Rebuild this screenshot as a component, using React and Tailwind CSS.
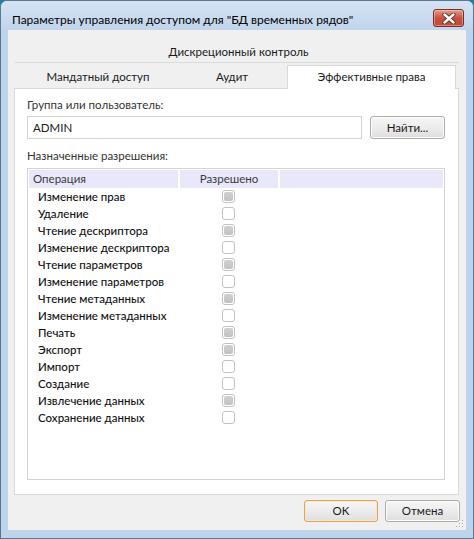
import React from "react";

const rows = [
  ["Изменение прав", true],
  ["Удаление", false],
  ["Чтение дескриптора", true],
  ["Изменение дескриптора", false],
  ["Чтение параметров", true],
  ["Изменение параметров", false],
  ["Чтение метаданных", true],
  ["Изменение метаданных", false],
  ["Печать", true],
  ["Экспорт", true],
  ["Импорт", false],
  ["Создание", false],
  ["Извлечение данных", true],
  ["Сохранение данных", false],
];

function Check({ on }) {
  return (
    <div className="w-[13px] h-[13px] rounded-[3px] border border-[#c2c2c2] bg-white flex items-center justify-center">
      {on && <div className="w-[9px] h-[9px] rounded-[2px] bg-gradient-to-b from-[#d0d0d0] to-[#c2c2c2]" />}
    </div>
  );
}

export default function App() {
  return (
    <div className="w-[474px] h-[539px] overflow-hidden bg-[#1d7f9e] text-[11.5px] leading-[16px] font-['Lato','Noto_Sans',sans-serif]">
      <div className="w-full h-full flex flex-col rounded-t-[7px] border border-[#5b7794] bg-[#bed4eb]">
        {/* title bar */}
        <div className="h-[29px] flex items-start justify-between pl-[11px] pr-[9px] bg-gradient-to-b from-[#d5e3f3] to-[#c1d5ec] rounded-t-[6px]">
          <div className="pt-[11px] text-[12px] text-[#000] whitespace-nowrap">
            Параметры управления доступом для "БД временных рядов"
          </div>
          <div className="mt-[8px] w-[31px] h-[18px] rounded-[3px] border border-[#7a2b27] bg-gradient-to-b from-[#e49a8c] via-[#c8503f] to-[#c24a36] flex items-center justify-center shadow-[inset_0_0_0_1px_rgba(255,255,255,0.35)]">
            <svg width="14" height="11" viewBox="0 0 14 11">
              <path d="M2.5 1.5 L11.5 9.5 M11.5 1.5 L2.5 9.5" stroke="#5a2a24" strokeWidth="4.2" strokeLinecap="round" />
              <path d="M2.5 1.5 L11.5 9.5 M11.5 1.5 L2.5 9.5" stroke="#ffffff" strokeWidth="2.4" strokeLinecap="round" />
            </svg>
          </div>
        </div>

        {/* client */}
        <div className="relative flex-1 mx-[7px] mb-[8px] bg-[#f0f0f0] flex flex-col pl-[6px] pr-[7px]">
          {/* tab row 1 */}
          <div className="mt-[11px] h-[22px] border-b border-[#dadada] flex items-center justify-center text-[#1a1a1a] ml-[1px] pl-[3px]">
            Дискреционный контроль
          </div>
          {/* tab row 2 */}
          <div className="h-[25px] flex items-end text-[#1a1a1a]">
            <div className="w-[168px] h-[23px] flex items-center justify-center">Мандатный доступ</div>
            <div className="w-[100px] h-[23px] flex items-center justify-center">Аудит</div>
            <div className="w-[5px]" />
            <div className="relative z-10 -mb-[1px] w-[169px] h-[24px] bg-white border border-b-0 border-[#d9d9d9] flex items-center justify-center pb-[1px]">
              Эффективные права
            </div>
          </div>
          {/* panel */}
          <div className="h-[407px] bg-white border border-[#d9d9d9] pl-[12px] pr-[13px] pt-[8px] flex flex-col">
            <div className="text-[#333]">Группа или пользователь:</div>
            <div className="mt-[3px] flex gap-[8px]">
              <div className="w-[335px] h-[23px] border border-[#d3d3d3] bg-white pl-[5px] flex items-center text-[#1a1a1a]">
                ADMIN
              </div>
              <div className="w-[75px] h-[23px] rounded-[3px] border border-[#adadad] bg-gradient-to-b from-[#f6f6f6] via-[#ececec] to-[#dedede] flex items-center justify-center text-[#1a1a1a] shadow-[inset_0_0_0_1px_#fcfcfc]">
                Найти...
              </div>
            </div>
            <div className="mt-[9px] text-[#333]">Назначенные разрешения:</div>
            <div className="mt-[4px] h-[312px] border border-[#d4d4d4] bg-white p-[1px] flex flex-col">
              <div className="h-[18px] flex gap-[2px] text-[#3a3a3a]">
                <div className="w-[149px] bg-[#e8e8fa] pl-[4px] flex items-center">Операция</div>
                <div className="w-[98px] bg-[#e8e8fa] flex items-center justify-center">Разрешено</div>
                <div className="flex-1 bg-[#e8e8fa]" />
              </div>
              <div className="flex flex-col">
                {rows.map(([name, on]) => (
                  <div key={name} className="h-[17px] flex items-center pl-[9px] text-[#111] font-medium">
                    <div className="w-[184px] whitespace-nowrap">{name}</div>
                    <Check on={on} />
                  </div>
                ))}
              </div>
            </div>
          </div>
          {/* buttons */}
          <div className="mt-[5px] flex justify-end gap-[7px] mr-[-1px]">
            <div className="w-[74px] h-[22px] rounded-[3px] border border-[#dda45a] bg-gradient-to-b from-[#f6f6f6] via-[#ececec] to-[#dedede] flex items-center justify-center text-[#1a1a1a] shadow-[inset_0_0_0_1px_#fbe7c6]">
              OK
            </div>
            <div className="w-[75px] h-[22px] rounded-[3px] border border-[#adadad] bg-gradient-to-b from-[#f6f6f6] via-[#ececec] to-[#dedede] flex items-center justify-center text-[#1a1a1a] shadow-[inset_0_0_0_1px_#fcfcfc]">
              Отмена
            </div>
          </div>
          <svg className="absolute right-[2px] bottom-[2px]" width="8" height="8" viewBox="0 0 8 8">
            <rect x="6" y="0" width="1" height="1" fill="#a8a8a8" />
            <rect x="3" y="3" width="1" height="1" fill="#a8a8a8" />
            <rect x="6" y="3" width="1" height="1" fill="#a8a8a8" />
            <rect x="0" y="6" width="1" height="1" fill="#a8a8a8" />
            <rect x="3" y="6" width="1" height="1" fill="#a8a8a8" />
            <rect x="6" y="6" width="1" height="1" fill="#a8a8a8" />
          </svg>
        </div>
      </div>
    </div>
  );
}
